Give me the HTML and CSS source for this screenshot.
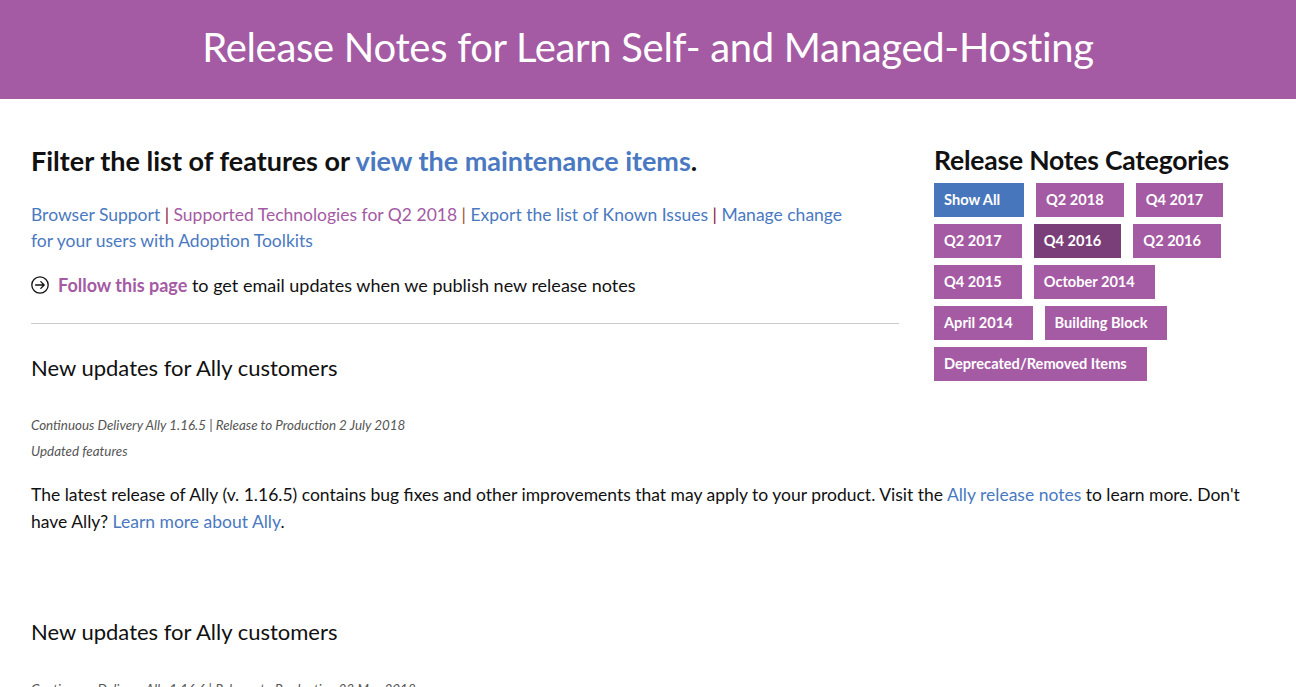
FILE: index.html
```html
<!DOCTYPE html>
<html lang="en">
<head>
<meta charset="utf-8">
<title>Release Notes for Learn Self- and Managed-Hosting</title>
<link rel="stylesheet" href="styles.css">
</head>
<body>
<header class="banner">
  <h1 class="banner-title">Release Notes for Learn Self- and Managed-Hosting</h1>
</header>
<main class="page">
  <aside class="categories">
    <h2 class="categories-title">Release Notes Categories</h2>
    <div class="cat-list">
      <a class="cat cat-all" href="#">Show All</a>
      <a class="cat" href="#">Q2 2018</a>
      <a class="cat" href="#">Q4 2017</a>
      <a class="cat" href="#">Q2 2017</a>
      <a class="cat cat-active" href="#">Q4 2016</a>
      <a class="cat" href="#">Q2 2016</a>
      <a class="cat" href="#">Q4 2015</a>
      <a class="cat" href="#">October 2014</a>
      <a class="cat" href="#">April 2014</a>
      <a class="cat" href="#">Building Block</a>
      <a class="cat" href="#">Deprecated/Removed Items</a>
    </div>
  </aside>
  <section class="intro">
    <h2 class="filter-title">Filter the list of features or <a class="link-blue" href="#">view the maintenance items</a>.</h2>
    <p class="quick-links">
      <a class="link-blue" href="#">Browser Support</a> <span class="sep sep-red">|</span> <a class="link-purple" href="#">Supported Technologies for Q2 2018</a> <span class="sep sep-orange">|</span> <a class="link-blue" href="#">Export the list of Known Issues</a> <span class="sep sep-red">|</span> <a class="link-blue" href="#">Manage change for your users with Adoption Toolkits</a>
    </p>
    <p class="follow">
      <svg class="follow-icon" width="18" height="18" viewBox="0 0 18 18" aria-hidden="true">
        <circle cx="9" cy="9" r="8.2" fill="none" stroke="#111" stroke-width="1.3"/>
        <path d="M4.6 9 H13.2 M9.8 5.6 L13.2 9 L9.8 12.4" fill="none" stroke="#111" stroke-width="1.3" stroke-linecap="round" stroke-linejoin="round"/>
      </svg>
      <span><a class="follow-link" href="#">Follow this page</a> to get email updates when we publish new release notes</span>
    </p>
    <hr class="divider">
  </section>
  <article class="update">
    <h3 class="update-title">New updates for Ally customers</h3>
    <p class="meta meta-first">Continuous Delivery Ally 1.16.5 | Release to Production 2 July 2018</p>
    <p class="meta">Updated features</p>
    <p class="body-text">The latest release of Ally (v. 1.16.5) contains bug fixes and other improvements that may apply to your product. Visit the <a class="link-blue" href="#">Ally release notes</a> to learn more. Don't have Ally? <a class="link-blue" href="#">Learn more about Ally</a>.</p>
  </article>
  <article class="update">
    <h3 class="update-title">New updates for Ally customers</h3>
    <p class="meta meta-first">Continuous Delivery Ally 1.16.6 | Release to Production 23 May 2018</p>
    <p class="meta">Updated features</p>
  </article>
</main>
</body>
</html>
```

FILE: styles.css
```css
* { box-sizing: border-box; }

html, body {
  margin: 0;
  padding: 0;
  background: #ffffff;
}

body {
  font-family: "Lato", "Open Sans", "Liberation Sans", sans-serif;
  color: #111111;
}

a { text-decoration: none; }

.banner {
  background: #a45ba3;
  height: 99px;
  display: flex;
  align-items: center;
  justify-content: center;
}

.banner-title {
  margin: 0;
  color: #ffffff;
  font-weight: 400;
  font-size: 40px;
  letter-spacing: -0.3px;
  padding-bottom: 6px;
}

.page {
  padding: 44px 44px 0 31px;
}

.categories {
  float: right;
  width: 318px;
}

.categories-title {
  margin: 0 0 6px 0;
  font-size: 26.5px;
  font-weight: 700;
  color: #111;
  line-height: 34px;
  letter-spacing: -0.2px;
}

.cat-list {
  display: flex;
  flex-wrap: wrap;
  gap: 7px 12px;
}

.cat {
  display: block;
  height: 34px;
  line-height: 34px;
  padding: 0 20px 0 10px;
  background: #a45ba3;
  color: #ffffff;
  font-size: 14.6px;
  font-weight: 700;
  min-width: 86px;
}

.cat-all { background: #4876bd; min-width: 90px; }
.cat-active { background: #7a3f78; }

.intro {
  width: 868px;
}

.filter-title {
  margin: 0;
  font-size: 27px;
  font-weight: 700;
  color: #111;
  line-height: 36px;
}

.link-blue { color: #4a79c1; }
.link-purple { color: #a45ba3; }

.quick-links {
  margin: 23px 0 0 0;
  width: 825px;
  font-size: 17.5px;
  line-height: 26px;
}

.sep { color: #111; }
.sep-red { color: #8a1538; }
.sep-orange { color: #a0522d; }

.follow {
  margin: 18px 0 0 0;
  font-size: 18px;
  line-height: 26px;
  display: flex;
  align-items: center;
}

.follow-icon {
  flex: none;
  margin-right: 9px;
}

.follow-link {
  color: #a45ba3;
  font-weight: 700;
}

.divider {
  margin: 25px 0 0 0;
  border: 0;
  border-top: 1px solid #cccccc;
  height: 0;
}

.update {
  padding-bottom: 53px;
}

.update-title {
  margin: 29px 0 0 0;
  font-size: 22px;
  font-weight: 400;
  line-height: 30px;
  color: #111;
}

.meta {
  margin: 0;
  font-size: 13.4px;
  font-style: italic;
  color: #555;
  line-height: 26px;
}

.meta-first {
  margin-top: 29px;
}

.body-text {
  margin: 17px 0 0 0;
  font-size: 17.5px;
  line-height: 27px;
}
```
